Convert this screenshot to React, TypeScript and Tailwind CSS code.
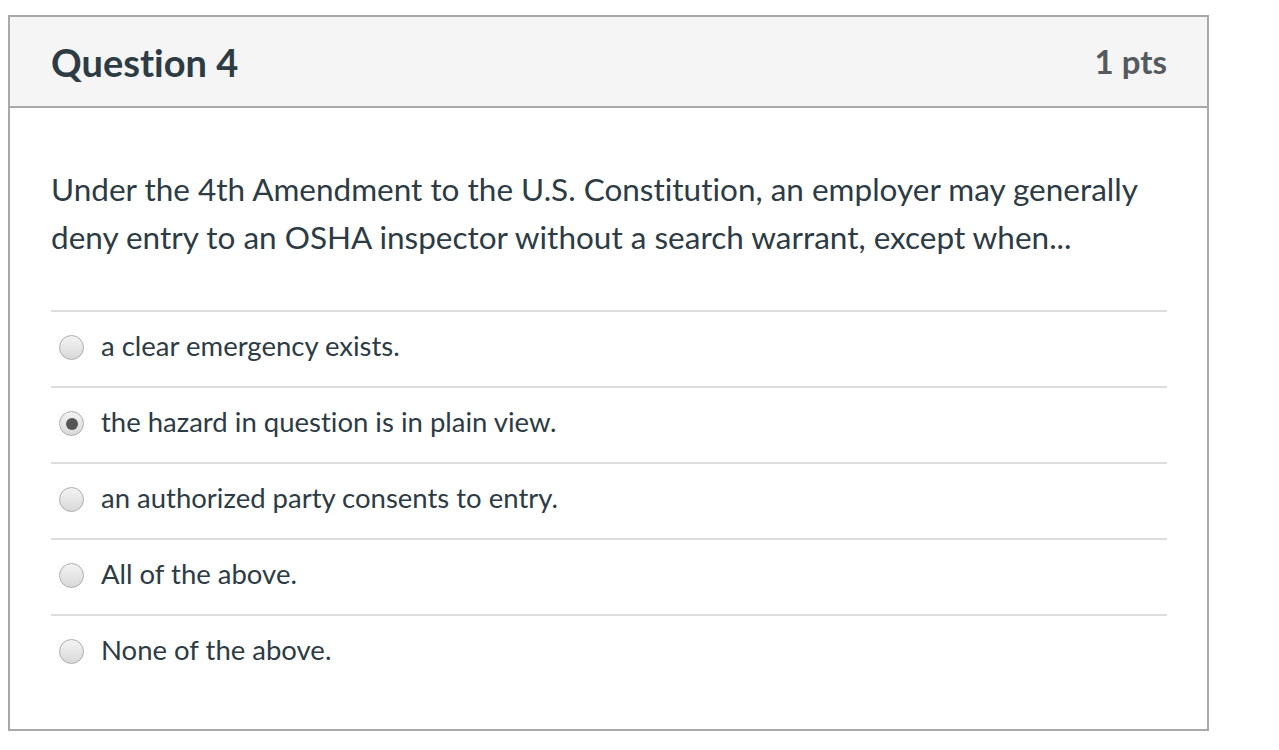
import React from "react";

const options = [
  { text: "a clear emergency exists.", selected: false },
  { text: "the hazard in question is in plain view.", selected: true },
  { text: "an authorized party consents to entry.", selected: false },
  { text: "All of the above.", selected: false },
  { text: "None of the above.", selected: false },
];

function Radio({ selected }: { selected: boolean }) {
  return (
    <span className="flex h-[25px] w-[25px] shrink-0 items-center justify-center rounded-full border border-[#aeaeae] bg-gradient-to-b from-[#f3f3f3] to-[#d9d9d9]">
      {selected && <span className="h-[12px] w-[12px] rounded-full bg-[#555555]" />}
    </span>
  );
}

export default function App() {
  return (
    <div
      className="min-h-[750px] bg-white pl-[8px] pt-[15px] [font-variant-ligatures:none]"
      style={{ fontFamily: "Lato, 'Noto Sans', sans-serif" }}
    >
      <div className="w-[1201px] border-2 border-[#a9a9a9] text-[#2d3b45]">
        <div className="flex h-[91px] items-center justify-between border-b-2 border-[#a9a9a9] bg-[#f5f5f5] pl-[41px] pr-[40px]">
          <h2 className="text-[38px] font-bold leading-none">Question 4</h2>
          <div className="text-[33px] font-bold leading-none text-[#555a5e]">1 pts</div>
        </div>
        <div className="pl-[41px] pr-[40px] pb-[39px] pt-[57px]">
          <p className="text-[31.5px] leading-[48px]">
            Under the 4th Amendment to the U.S. Constitution, an employer may generally deny entry to an OSHA inspector without a search warrant, except when...
          </p>
          <div className="mt-[49px]">
            {options.map((o, i) => (
              <div key={i} className="flex h-[76px] items-center gap-[17px] border-t-2 border-[#dddddd] pl-[8px] pb-[3px]">
                <Radio selected={o.selected} />
                <span className="pb-[3px] text-[27.5px] leading-none">{o.text}</span>
              </div>
            ))}
          </div>
        </div>
      </div>
    </div>
  );
}
